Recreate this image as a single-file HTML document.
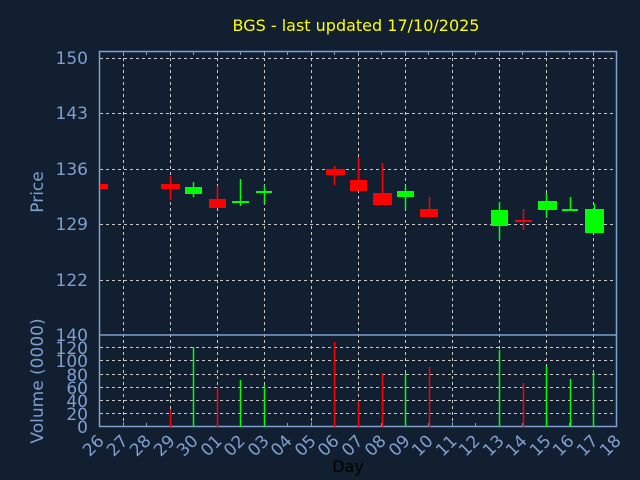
<!DOCTYPE html>
<html><head><meta charset="utf-8"><style>
html,body{margin:0;padding:0;background:#111f30;}
svg{display:block;font-family:"DejaVu Sans","Liberation Sans",sans-serif;}
</style></head><body>
<svg width="640" height="480" viewBox="0 0 640 480">
<rect width="640" height="480" fill="#111f30"/>
<text x="356" y="31" fill="#ffff00" font-size="16" text-anchor="middle">BGS - last updated 17/10/2025</text>
<g stroke="#c8c8c8" stroke-width="1" stroke-dasharray="3,3" fill="none">
<path d="M100 58.5H616M100 113.5H616M100 169.5H616M100 224.5H616M100 280.5H616"/>
<path d="M100 347.5H616M100 360.5H616M100 374.5H616M100 387.5H616M100 400.5H616M100 413.5H616"/>
<path d="M123.5 52V426M170.5 52V426M217.5 52V426M264.5 52V426M311.5 52V426M358.5 52V426M405.5 52V426M452.5 52V426M499.5 52V426M546.5 52V426M593.5 52V426"/>
</g>
<g stroke="#7f9fcf" stroke-width="1.5" fill="none">
<rect x="99.5" y="51.5" width="517" height="375"/>
<path d="M99.5 335H616.5"/>
</g>
<g stroke="#7f9fcf" stroke-width="1">
<path d="M123.5 52v4M146.5 52v3M170.5 52v4M193.5 52v3M217.5 52v4M240.5 52v3M264.5 52v4M287.5 52v3M311.5 52v4M334.5 52v3M358.5 52v4M381.5 52v3M405.5 52v4M428.5 52v3M452.5 52v4M475.5 52v3M499.5 52v4M522.5 52v3M546.5 52v4M569.5 52v3M593.5 52v4"/>
<path d="M123.5 426v-4M146.5 426v-3M170.5 426v-4M193.5 426v-3M217.5 426v-4M240.5 426v-3M264.5 426v-4M287.5 426v-3M311.5 426v-4M334.5 426v-3M358.5 426v-4M381.5 426v-3M405.5 426v-4M428.5 426v-3M452.5 426v-4M475.5 426v-3M499.5 426v-4M522.5 426v-3M546.5 426v-4M569.5 426v-3M593.5 426v-4"/>
</g>
<g fill="#7f9fcf" font-size="17" text-anchor="end">
<text x="88" y="64">150</text><text x="88" y="119">143</text><text x="88" y="175">136</text><text x="88" y="230">129</text><text x="88" y="286">122</text>
<text x="88" y="341">140</text><text x="88" y="354">120</text><text x="88" y="367">100</text><text x="88" y="381">80</text><text x="88" y="394">60</text><text x="88" y="407">40</text><text x="88" y="420">20</text><text x="88" y="433">0</text>
</g>
<text transform="translate(43,192) rotate(-90)" fill="#7f9fcf" font-size="17" text-anchor="middle">Price</text>
<text transform="translate(43,381) rotate(-90)" fill="#7f9fcf" font-size="17" text-anchor="middle">Volume (0000)</text>
<text x="348" y="472" fill="#000" font-size="16" text-anchor="middle">Day</text>
<g fill="#7f9fcf" font-size="17" text-anchor="end">
<text transform="translate(105,442) rotate(-45)">26</text>
<text transform="translate(129,442) rotate(-45)">27</text>
<text transform="translate(152,442) rotate(-45)">28</text>
<text transform="translate(176,442) rotate(-45)">29</text>
<text transform="translate(199,442) rotate(-45)">30</text>
<text transform="translate(223,442) rotate(-45)">01</text>
<text transform="translate(246,442) rotate(-45)">02</text>
<text transform="translate(270,442) rotate(-45)">03</text>
<text transform="translate(293,442) rotate(-45)">04</text>
<text transform="translate(317,442) rotate(-45)">05</text>
<text transform="translate(340,442) rotate(-45)">06</text>
<text transform="translate(364,442) rotate(-45)">07</text>
<text transform="translate(387,442) rotate(-45)">08</text>
<text transform="translate(411,442) rotate(-45)">09</text>
<text transform="translate(434,442) rotate(-45)">10</text>
<text transform="translate(458,442) rotate(-45)">11</text>
<text transform="translate(481,442) rotate(-45)">12</text>
<text transform="translate(505,442) rotate(-45)">13</text>
<text transform="translate(528,442) rotate(-45)">14</text>
<text transform="translate(552,442) rotate(-45)">15</text>
<text transform="translate(575,442) rotate(-45)">16</text>
<text transform="translate(599,442) rotate(-45)">17</text>
<text transform="translate(622,442) rotate(-45)">18</text>
</g>
<g fill="#ff0000" stroke="#ff0000" stroke-width="1.5">
<rect x="100" y="184" width="8" height="5" stroke="none"/>
<path d="M170.5 176V200M217.5 186V208M334.5 166V185M358.5 157V191M382.5 163V205M429.5 197V217M523.5 209V230"/>
<rect x="161" y="184" width="19" height="5" stroke="none"/>
<rect x="209" y="199" width="17" height="9" stroke="none"/>
<rect x="326" y="169" width="19" height="6" stroke="none"/>
<rect x="350" y="180" width="17" height="11" stroke="none"/>
<rect x="373" y="193" width="19" height="12" stroke="none"/>
<rect x="420" y="209" width="18" height="8" stroke="none"/>
<rect x="515" y="220" width="17" height="2" stroke="none"/>
</g>
<g fill="#00ff00" stroke="#00ff00" stroke-width="1.5">
<path d="M193.5 182V197M240.5 179V206M264.5 185V204M405.5 186V209M499.5 202V240M546.5 193V218M570.5 197V211M594.5 204V233"/>
<rect x="185" y="187" width="17" height="7" stroke="none"/>
<rect x="232" y="201" width="17" height="2" stroke="none"/>
<rect x="256" y="191" width="16" height="2" stroke="none"/>
<rect x="397" y="191" width="17" height="6" stroke="none"/>
<rect x="491" y="210" width="17" height="16" stroke="none"/>
<rect x="538" y="201" width="19" height="9" stroke="none"/>
<rect x="562" y="209" width="16" height="2" stroke="none"/>
<rect x="585" y="209" width="19" height="24" stroke="none"/>
</g>
<g stroke="#ff0000" stroke-width="1.5">
<path d="M170.5 409V427M217.5 387V427M334.5 342V427M358.5 401V427M382.5 373V427M429.5 367V427M523.5 383V427"/>
</g>
<g stroke="#00ff00" stroke-width="1.5">
<path d="M193.5 347V427M240.5 380V427M264.5 385V427M405.5 373V427M499.5 350V427M546.5 366V427M570.5 379V427M593.5 372V427"/>
</g>
</svg>
</body></html>
